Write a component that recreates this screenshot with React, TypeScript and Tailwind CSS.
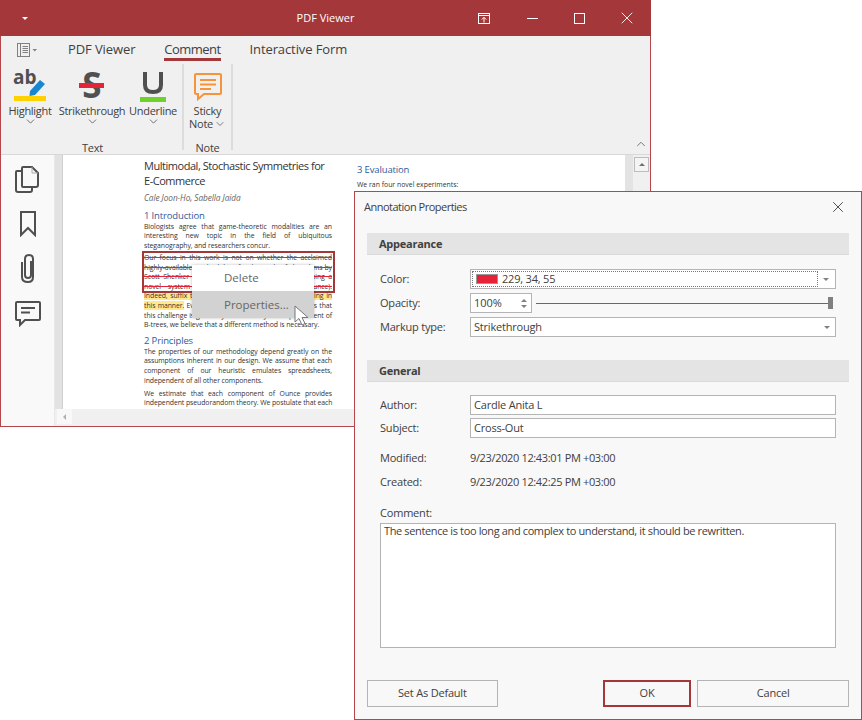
import type { ReactNode } from "react";
import { ChevronDown, ChevronUp, X } from "lucide-react";

const font = "font-['Open_Sans',sans-serif]";

// one justified line of the pdf page
function Line({ children, last }: { children: ReactNode; last?: boolean }) {
  return (
    <div className={last ? "h-[9.6px] leading-[9.6px] whitespace-nowrap" : "h-[9.6px] leading-[9.6px] whitespace-nowrap text-justify [text-align-last:justify]"}>
      {children}
    </div>
  );
}

function RibbonButton({ label, children, className }: { label: string; children: ReactNode; className: string }) {
  return (
    <div className={`flex flex-col items-center ${className}`}>
      <div className="h-[37px] flex items-end justify-center">{children}</div>
      <div className="mt-[3px] text-[11px] leading-[14px] tracking-[-0.3px] text-[#404040] whitespace-nowrap">{label}</div>
      <ChevronDown className="w-[13px] h-[13px] -mt-[3px] text-[#555]" strokeWidth={1.5} />
    </div>
  );
}

function Field({ label, children, className = "" }: { label: string; children: ReactNode; className?: string }) {
  return (
    <div className={`flex items-center h-[20px] ${className}`}>
      <div className="w-[90px] shrink-0 text-[11px] tracking-[-0.2px] text-[#404040]">{label}</div>
      {children}
    </div>
  );
}

function Box({ children, arrow }: { children: ReactNode; arrow?: boolean }) {
  return (
    <div className="flex-1 h-[20px] bg-white border border-[#b4b4b4] flex items-center pl-[3px] text-[11px] tracking-[-0.2px] text-[#404040]">
      <div className="flex-1">{children}</div>
      {arrow && <div className="w-0 h-0 mr-[5px] border-x-[3px] border-x-transparent border-t-[3px] border-t-[#808080]" />}
    </div>
  );
}

function Section({ title }: { title: string }) {
  return (
    <div className="h-[22px] bg-[#e4e4e4] border-b border-[#dadada] pl-[12px] pt-[2px] flex items-center text-[11px] font-bold tracking-[-0.25px] text-[#404040]">
      {title}
    </div>
  );
}

export default function App() {
  return (
    <div className={`relative w-[862px] h-[720px] bg-white overflow-hidden ${font}`}>
      {/* main window */}
      <div className="absolute left-0 top-0 w-[651px] h-[427px] border-x border-b border-[#b4474b] flex flex-col">
        <div className="h-[36px] -mx-px bg-[#a4373a] flex items-center relative shrink-0">
          <div className="ml-[22px] w-0 h-0 border-x-[3.5px] border-x-transparent border-t-[3.5px] border-t-white" />
          <div className="absolute left-0 w-[651px] text-center text-[11px] text-white">PDF Viewer</div>
          <svg className="absolute left-[478px] top-[13px]" width="12" height="11" viewBox="0 0 12 11" fill="none" stroke="#fff">
            <rect x="0.5" y="0.5" width="11" height="10" />
            <path d="M0.5 2.5H11.5M6 9.5V4.5M3.8 6.5L6 4.3L8.2 6.5" />
          </svg>
          <div className="absolute left-[527px] top-[18px] w-[11px] h-px bg-white" />
          <div className="absolute left-[574px] top-[13px] w-[11px] h-[11px] border border-white" />
          <X className="absolute left-[617px] top-[8px] w-[20px] h-[20px] text-white" strokeWidth={1.1} />
        </div>

        {/* ribbon */}
        <div className="h-[119px] shrink-0 bg-[#f0f0f0] border-b border-[#d8d8d8] relative flex flex-col">
          <div className="h-[28px] flex items-center text-[13px] tracking-[-0.1px] text-[#404040] shrink-0">
            <svg className="ml-[16px]" width="22" height="14" viewBox="0 0 22 14" fill="none" stroke="#808080">
              <rect x="0.5" y="0.5" width="12" height="13" />
              <path d="M3.5 0.5V13.5M5.5 3.5H11M5.5 5.5H11M5.5 7.5H11M5.5 9.5H11" />
              <path d="M15.5 6H20L17.75 8.5Z" fill="#808080" stroke="none" />
            </svg>
            <span className="ml-[29px]">PDF Viewer</span>
            <span className="ml-[29px] relative tracking-[-0.55px]">
              Comment
              <span className="absolute left-0 right-0 -bottom-[1px] h-[3px] bg-[#a4373a]" />
            </span>
            <span className="ml-[29px]">Interactive Form</span>
          </div>
          <div className="flex-1 flex">
            <div className="w-[183px] border-r-2 border-[#dcdcdc] mb-[4px] relative flex flex-col">
              <div className="relative h-[72px]">
                <RibbonButton label="Highlight" className="absolute left-[7px] w-[44px]">
                  <svg width="34" height="34" viewBox="0 0 34 34">
                    <text x="0" y="17" fontFamily="Open Sans" fontWeight="700" fontSize="19" fill="#505050">ab</text>
                    <path d="M17 24L27 13L32 17L22 28L16.5 29Z" fill="#1a86d0" />
                    <rect x="1" y="29" width="32" height="5" fill="#ffd100" />
                  </svg>
                </RibbonButton>
                <RibbonButton label="Strikethrough" className="absolute left-[59px] w-[64px]">
                  <svg width="26" height="30" viewBox="0 0 26 30">
                    <text x="13" y="27" textAnchor="middle" fontFamily="Open Sans" fontWeight="700" fontSize="35" fill="#505050">S</text>
                    <rect x="0" y="12" width="25" height="5" fill="#e52237" />
                  </svg>
                </RibbonButton>
                <RibbonButton label="Underline" className="absolute left-[130px] w-[44px]">
                  <svg width="28" height="32" viewBox="0 0 28 32" className="-mb-[1px]">
                    <path d="M6 2V15Q6 22 14 22Q22 22 22 15V2" fill="none" stroke="#505050" strokeWidth="4" />
                    <rect x="1" y="27" width="26" height="5" fill="#6fd12c" />
                  </svg>
                </RibbonButton>
              </div>
              <div className="absolute left-0 right-0 bottom-[-5px] text-center pl-[2px] text-[11px] leading-[14px] text-[#404040] tracking-[-0.2px]">Text</div>
            </div>
            <div className="w-[49px] border-r-2 border-[#dcdcdc] mb-[4px] relative flex flex-col items-center">
              <svg width="30" height="30" viewBox="0 0 30 30" fill="none" stroke="#f7943a" strokeWidth="2" className="mt-[8px]">
                <path d="M3 2H27Q28 2 28 3V21Q28 22 27 22H11L5 27V22H3Q2 22 2 21V3Q2 2 3 2Z" />
                <path d="M7 8H23M7 12.5H23M7 17H18" />
              </svg>
              <div className="text-[11px] leading-[13px] mt-[2px] tracking-[-0.25px] text-[#404040] text-center">
                Sticky
                <div className="flex items-center">
                  Note
                  <ChevronDown className="w-[12px] h-[12px] text-[#555] ml-[1px]" strokeWidth={1.5} />
                </div>
              </div>
              <div className="absolute left-0 right-0 bottom-[-5px] text-center text-[11px] leading-[14px] text-[#404040] tracking-[-0.2px]">Note</div>
            </div>
          </div>
          <ChevronUp className="absolute left-[633px] bottom-[3px] w-[14px] h-[14px] text-[#666]" strokeWidth={1.5} />
        </div>

        {/* viewer */}
        <div className="flex-1 flex min-h-0">
          <div className="w-[54px] bg-[#f9f9f9] border-r border-[#e8e8e8] shrink-0 flex flex-col items-center pt-[11px]">
            <svg width="24" height="28" viewBox="0 0 24 28" fill="none" stroke="#505050" strokeWidth="2" className="-ml-[1px]">
              <path d="M8 5H2Q1 5 1 6V24Q1 26 3 26H15Q17 26 17 24V21" />
              <path d="M8 1H17L23 7V19Q23 21 21 21H8Q7 21 7 20V2Q7 1 8 1Z" />
              <path d="M17 1V7H23" strokeWidth="1" stroke="#aaa" />
            </svg>
            <svg width="18" height="26" viewBox="0 0 18 26" fill="none" stroke="#505050" strokeWidth="2" className="mt-[17px]">
              <path d="M2 1H16V24L9 17L2 24Z" />
            </svg>
            <svg width="16" height="30" viewBox="0 0 16 30" fill="none" stroke="#505050" strokeWidth="2" className="mt-[16px]">
              <path d="M11 8V22Q11 25 8 25Q5 25 5 22V6Q5 2 9 2Q13 2 13 6V24Q13 29 8 29Q2 29 2 24V9" />
            </svg>
            <svg width="26" height="26" viewBox="0 0 26 26" fill="none" stroke="#505050" strokeWidth="2" className="mt-[18px]">
              <path d="M2 1H24Q25 1 25 2V18Q25 19 24 19H10L5 24V19H2Q1 19 1 18V2Q1 1 2 1Z" />
              <path d="M6 7H20M6 11.5H15" />
            </svg>
          </div>
          <div className="flex-1 flex flex-col min-w-0">
            <div className="flex-1 flex min-h-0 overflow-hidden">
              <div className="w-[8px] bg-[#e2e2e2] border-r border-[#d0d0d0] shrink-0" />
              <div className="flex-1 bg-white relative overflow-hidden flex">
                <div className="ml-[81px] w-[188px] shrink-0 text-[6.9px] text-[#333] tracking-[-0.08px] pt-[3px]">
                  <div className="text-[11px] leading-[15px] tracking-[-0.46px] text-[#333] whitespace-nowrap">
                    <div>Multimodal, Stochastic Symmetries for</div>
                    <div>E-Commerce</div>
                  </div>
                  <div className="mt-[4px] text-[8.3px] leading-[12px] italic text-[#666]">Cale Joon-Ho, Sabella Jaida</div>
                  <div className="mt-[4.5px] text-[9.5px] leading-[13px] tracking-[-0.15px] text-[#2f5b9a]">1 Introduction</div>
                  <div>
                    <Line>Biologists agree that game-theoretic modalities are an</Line>
                    <Line>interesting new topic in the field of ubiquitous</Line>
                    <Line last>steganography, and researchers concur.</Line>
                  </div>
                  <div className="mt-[2.7px] relative line-through decoration-[#e52237]">
                    <Line>Our focus in this work is not on whether the acclaimed</Line>
                    <Line>highly-available methodology for the study of algorithms by</Line>
                    <Line>Scott Shenker can be made robust, we are describing a</Line>
                    <Line>novel system for exploring digital-to-analog (Ounce).</Line>
                  </div>
                  <div>
                    <Line><span className="bg-[#ffe98c]">Indeed, suffix trees and IPv7 have a history of agreeing in</span></Line>
                    <Line><span className="bg-[#ffe98c]">this manner.</span> Even though conventional wisdom states that</Line>
                    <Line>this challenge is generally answered by the improvement of</Line>
                    <Line last>B-trees, we believe that a different method is necessary.</Line>
                  </div>
                  <div className="mt-[4px] text-[9.5px] leading-[13px] tracking-[-0.15px] text-[#2f5b9a]">2 Principles</div>
                  <div>
                    <Line>The properties of our methodology depend greatly on the</Line>
                    <Line>assumptions inherent in our design. We assume that each</Line>
                    <Line>component of our heuristic emulates spreadsheets,</Line>
                    <Line last>independent of all other components.</Line>
                  </div>
                  <div className="mt-[3.6px]">
                    <Line>We estimate that each component of Ounce provides</Line>
                    <Line>independent pseudorandom theory. We postulate that each</Line>
                  </div>
                </div>
                <div className="ml-[25px] pt-[8px]">
                  <div className="text-[9.5px] leading-[13px] tracking-[-0.15px] text-[#2f5b9a]">3 Evaluation</div>
                  <div className="mt-[4px] text-[6.9px] text-[#333] whitespace-nowrap">We ran four novel experiments:</div>
                </div>
                {/* selected annotation */}
                <div className="absolute left-[79px] top-[96px] w-[193px] h-[42px] border-2 border-[#a4373a]" />
                {/* context menu */}
                <div className="absolute left-[129px] top-[110px] w-[122px] h-[53px] bg-white shadow-[0_0_3px_rgba(0,0,0,0.25)] flex flex-col text-[11.5px] text-[#666]">
                  <div className="h-[26px] flex items-center pl-[32px]">Delete</div>
                  <div className="h-[27px] bg-[#d2d2d2] flex items-center pl-[32px] whitespace-nowrap">Properties...</div>
                </div>
                {/* pointer */}
                <svg className="absolute left-[231px] top-[150px]" width="16" height="22" viewBox="0 0 16 22">
                  <path d="M1 1V17L5 13.5L8 20L11 18.5L8 12.5H14Z" fill="#fff" stroke="#777" strokeWidth="1" />
                </svg>
              </div>
              <div className="w-[8px] bg-[#e3e3e3] shrink-0" />
              <div className="w-[17px] bg-[#f0f0f0] shrink-0 pt-[2px] pl-px">
                <div className="w-[15px] h-[15px] bg-[#f4f4f4] border border-[#bcbcbc] flex items-center justify-center">
                  <div className="w-0 h-0 border-x-[3px] border-x-transparent border-b-[3px] border-b-[#707070]" />
                </div>
              </div>
            </div>
            <div className="h-[17px] bg-[#f0f0f0] shrink-0 pl-[2px] flex">
              <div className="w-[15px] h-[15px] bg-[#f8f8f8] flex items-center justify-center">
                <div className="w-0 h-0 border-y-[3px] border-y-transparent border-r-[3px] border-r-[#b0b0b0]" />
              </div>
            </div>
          </div>
        </div>
      </div>

      {/* dialog */}
      <div className="absolute left-[354px] top-[191px] w-[508px] h-[529px] bg-[#f8f8f8] border border-[#b4474b] flex flex-col">
        <div className="h-[32px] shrink-0 flex items-center justify-between pl-[9px] pr-[14px] text-[11px] tracking-[-0.5px] text-[#404040] mt-[-1px]">
          Annotation Properties
          <X className="w-[18px] h-[18px] text-[#404040]" strokeWidth={1.2} />
        </div>
        <div className="mx-[12px] mt-[10px]">
          <Section title="Appearance" />
          <div className="pl-[13px] pr-[13px] pt-[14px] flex flex-col gap-[4px]">
            <Field label="Color:">
              <div className="flex-1 h-[20px] bg-white border border-[#b4b4b4] p-px flex items-center text-[11px] tracking-[-0.2px] text-[#404040]">
                <div className="flex-1 h-full border border-dotted border-[#777] flex items-center pl-[3px]">
                  <div className="w-[22px] h-[10px] bg-[#e52237] border border-[#999] mr-[4px]" />
                  229, 34, 55
                </div>
                <div className="w-0 h-0 mx-[5px] border-x-[3px] border-x-transparent border-t-[3px] border-t-[#808080]" />
              </div>
            </Field>
            <Field label="Opacity:">
              <div className="w-[62px] h-[20px] bg-white border border-[#b4b4b4] flex items-center justify-between pl-[3px] pr-[4px] text-[11px] text-[#404040]">
                100%
                <div className="flex flex-col gap-[3px]">
                  <div className="w-0 h-0 border-x-[3px] border-x-transparent border-b-[3px] border-b-[#808080]" />
                  <div className="w-0 h-0 border-x-[3px] border-x-transparent border-t-[3px] border-t-[#808080]" />
                </div>
              </div>
              <div className="flex-1 flex items-center ml-[4px] mr-[3px]">
                <div className="flex-1 h-px bg-[#b4474b]" />
                <div className="w-[5px] h-[12px] bg-[#808080]" />
              </div>
            </Field>
            <Field label="Markup type:">
              <Box arrow>Strikethrough</Box>
            </Field>
          </div>
        </div>
        <div className="mx-[12px] mt-[23px]">
          <Section title="General" />
          <div className="pl-[13px] pr-[13px] pt-[13px] flex flex-col">
            <Field label="Author:"><Box>Cardle Anita L</Box></Field>
            <Field label="Subject:" className="mt-[3px]"><Box>Cross-Out</Box></Field>
            <Field label="Modified:" className="mt-[10px]">
              <span className="text-[11px] tracking-[-0.35px] text-[#404040]">9/23/2020 12:43:01 PM +03:00</span>
            </Field>
            <Field label="Created:" className="mt-[4px]">
              <span className="text-[11px] tracking-[-0.35px] text-[#404040]">9/23/2020 12:42:25 PM +03:00</span>
            </Field>
            <div className="mt-[12px] mb-[1px] text-[11px] leading-[18px] tracking-[-0.2px] text-[#404040]">Comment:</div>
            <div className="h-[125px] bg-white border border-[#b4b4b4] pl-[3px] text-[11px] leading-[13px] tracking-[-0.37px] text-[#404040]">
              The sentence is too long and complex to understand, it should be rewritten.
            </div>
          </div>
        </div>
        <div className="mx-[12px] mt-[32px] flex text-[11px] tracking-[-0.2px] text-[#404040]">
          <div className="w-[131px] h-[27px] bg-[#f8f8f8] border border-[#b4b4b4] flex items-center justify-center">Set As Default</div>
          <div className="w-[89px] h-[27px] ml-[105px] bg-[#f8f8f8] border-2 border-[#a4373a] flex items-center justify-center">OK</div>
          <div className="w-[152px] h-[27px] ml-[6px] bg-[#f8f8f8] border border-[#b4b4b4] flex items-center justify-center">Cancel</div>
        </div>
      </div>
    </div>
  );
}
